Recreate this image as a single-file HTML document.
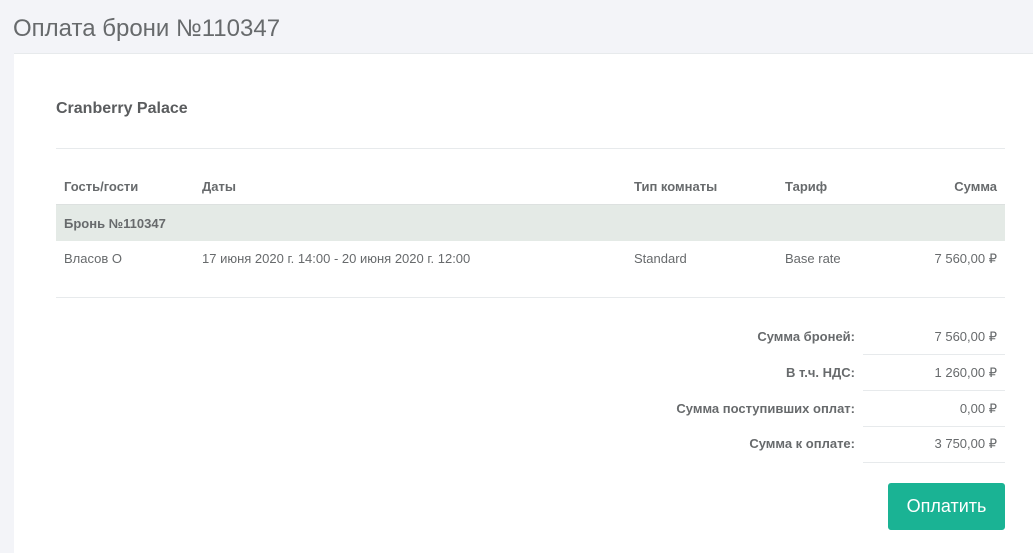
<!DOCTYPE html>
<html><head><meta charset="utf-8"><style>
html{overflow:hidden;height:553px}
body{margin:0;width:1033px;height:553px;background:#f3f4f8;font-family:"Liberation Sans",Arial,sans-serif;color:#676a6c;position:relative;overflow:hidden}
.a{position:absolute;white-space:nowrap}
h1{position:absolute;left:13px;top:15px;margin:0;font-size:24px;font-weight:normal;color:#676a6c}
.card{position:absolute;left:14px;top:53px;width:1019px;height:500px;background:#fff;border-top:1px solid #e7eaec}
.hr{position:absolute;height:1px;background:#e7eaec}
.b{font-weight:bold}
.t{font-size:13px;color:#676a6c}
.r{text-align:right}
.btn{position:absolute;left:888px;top:483px;width:117px;height:47px;background:#1ab394;border-radius:3px;color:#fff;font-size:18px;line-height:47px;text-align:center}
</style></head><body>
<h1>Оплата брони №110347</h1>
<div class="card"></div>
<div class="a b" style="left:56px;top:100px;font-size:16px;color:#5a5c5e">Cranberry Palace</div>
<div class="hr" style="left:56px;top:148px;width:949px"></div>
<div class="a t b" style="left:64px;top:179px">Гость/гости</div>
<div class="a t b" style="left:202px;top:179px">Даты</div>
<div class="a t b" style="left:634px;top:179px">Тип комнаты</div>
<div class="a t b" style="left:785px;top:179px">Тариф</div>
<div class="a t b" style="left:900px;top:179px;width:97px;text-align:right">Сумма</div>
<div class="hr" style="left:56px;top:204px;width:949px;background:#dde1e0"></div>
<div class="a" style="left:56px;top:205px;width:949px;height:36px;background:#e4eae6"></div>
<div class="a t b" style="left:64px;top:216px">Бронь №110347</div>
<div class="a t" style="left:64px;top:251px">Власов О</div>
<div class="a t" style="left:202px;top:251px">17 июня 2020 г. 14:00 - 20 июня 2020 г. 12:00</div>
<div class="a t" style="left:634px;top:251px">Standard</div>
<div class="a t" style="left:785px;top:251px">Base rate</div>
<div class="a t" style="left:900px;top:251px;width:97px;text-align:right">7 560,00 ₽</div>
<div class="hr" style="left:56px;top:297px;width:949px"></div>
<div class="a t b r" style="left:600px;top:329px;width:255px">Сумма броней:</div>
<div class="a t r" style="left:870px;top:329px;width:127px">7 560,00 ₽</div>
<div class="hr" style="left:863px;top:354px;width:142px"></div>
<div class="a t b r" style="left:600px;top:365px;width:255px">В т.ч. НДС:</div>
<div class="a t r" style="left:870px;top:365px;width:127px">1 260,00 ₽</div>
<div class="hr" style="left:863px;top:390px;width:142px"></div>
<div class="a t b r" style="left:600px;top:401px;width:255px">Сумма поступивших оплат:</div>
<div class="a t r" style="left:870px;top:401px;width:127px">0,00 ₽</div>
<div class="hr" style="left:863px;top:426px;width:142px"></div>
<div class="a t b r" style="left:600px;top:436px;width:255px">Сумма к оплате:</div>
<div class="a t r" style="left:870px;top:436px;width:127px">3 750,00 ₽</div>
<div class="hr" style="left:863px;top:462px;width:142px"></div>
<div class="btn">Оплатить</div>
</body></html>
